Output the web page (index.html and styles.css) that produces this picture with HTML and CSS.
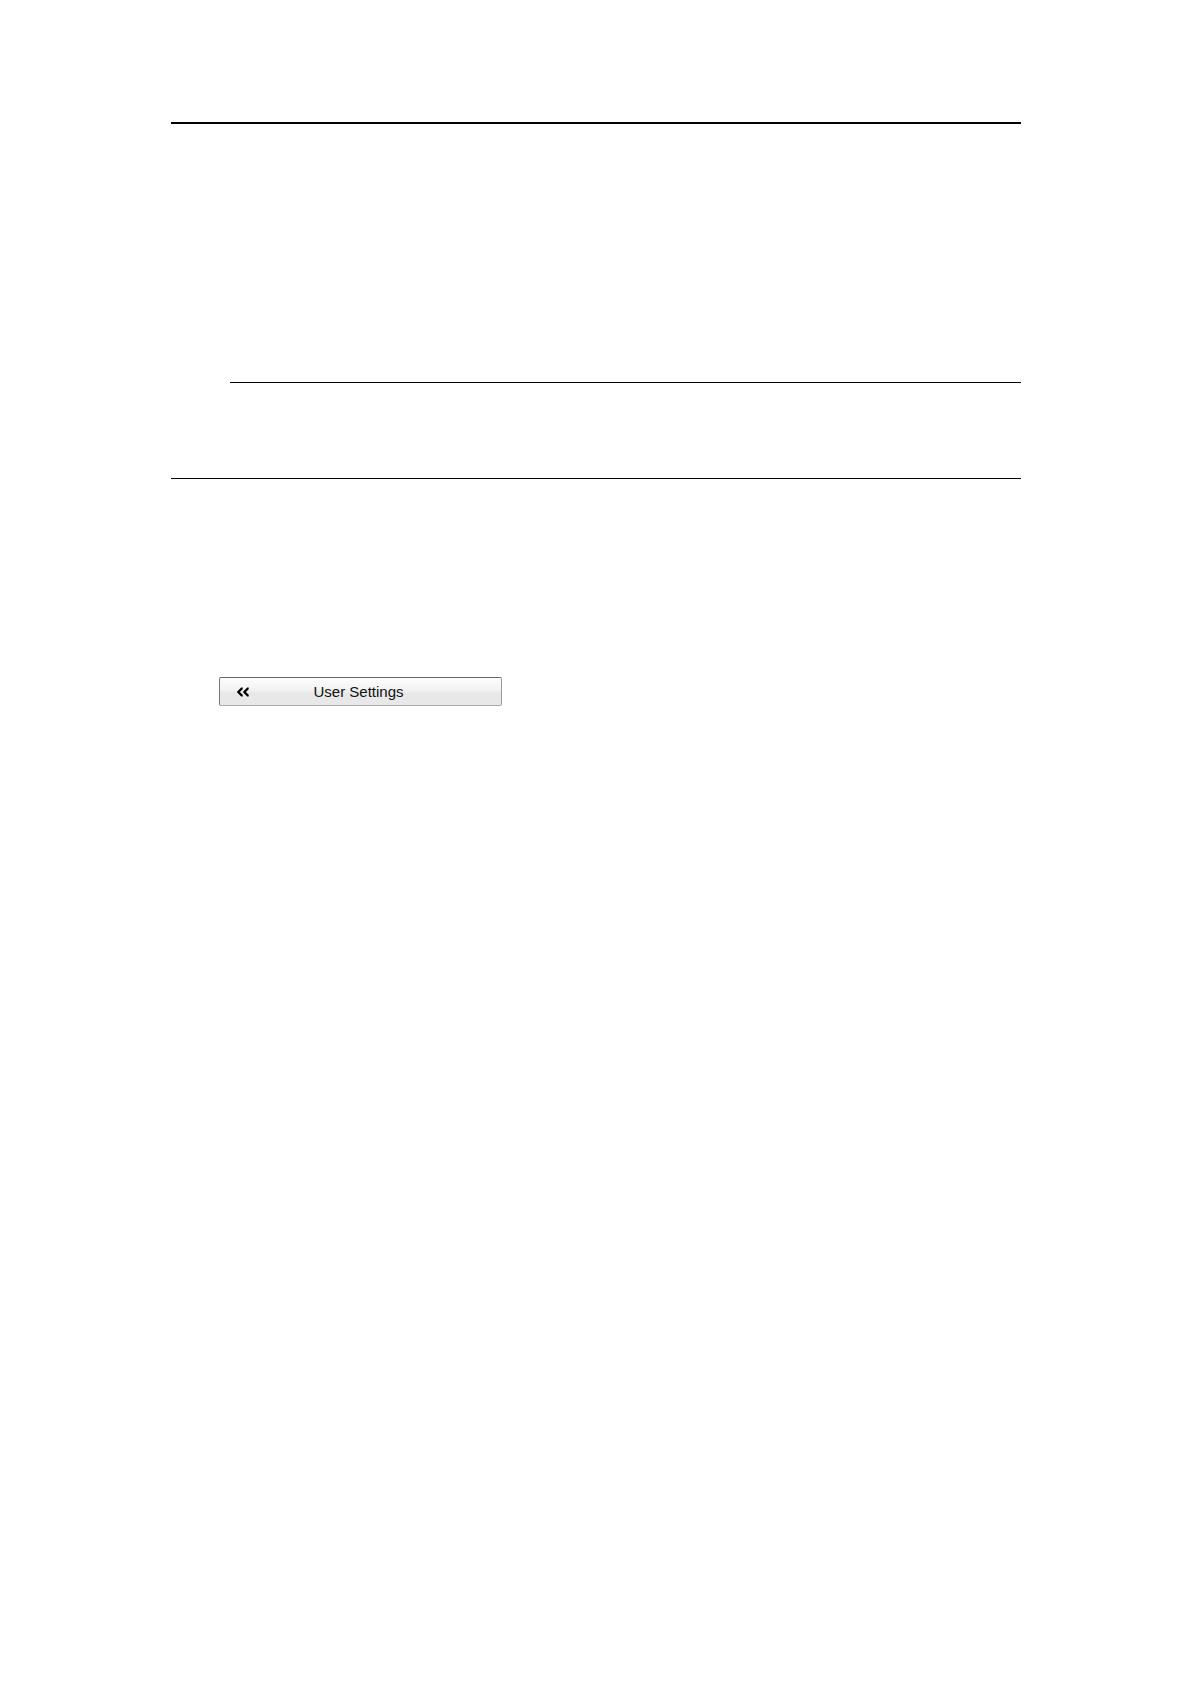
FILE: index.html
```html
<!DOCTYPE html>
<html lang="en">
<head>
<meta charset="utf-8">
<meta name="viewport" content="width=device-width, initial-scale=1">
<title>User Settings</title>
<link rel="stylesheet" href="styles.css">
</head>
<body>
<main class="page">
  <hr class="rule rule-header">
  <hr class="rule rule-indented">
  <hr class="rule rule-section">
  <button class="menu-button" type="button">
    <svg class="chevrons" viewBox="0 0 12 10" aria-hidden="true">
      <path d="M4.2 0.4H5.7V2.2L2.9 5L5.7 7.8V9.6H4.2L0.2 5.6V4.4ZM10.2 0.4H11.7V2.2L8.9 5L11.7 7.8V9.6H10.2L6.2 5.6V4.4Z"/>
    </svg>
    <span class="menu-label">User Settings</span>
  </button>
</main>
</body>
</html>
```
FILE: styles.css
```css
* {
  box-sizing: border-box;
}

body {
  margin: 0;
  background: #fff;
  color: #000;
  font-family: "Liberation Sans", Arial, sans-serif;
}

.page {
  display: flex;
  flex-direction: column;
  min-height: 100vh;
  padding: 122px 170px 122px 171px;
}

.rule {
  align-self: stretch;
  height: 1px;
  margin: 0;
  border: 0;
  background: #000;
}

.rule-header {
  height: 2px;
}

.rule-indented {
  margin-top: 258px;
  margin-left: 59px;
}

.rule-section {
  margin-top: 95px;
}

.menu-button {
  display: grid;
  grid-template-columns: 12px 1fr 12px;
  align-items: center;
  width: 283px;
  max-width: 100%;
  height: 29px;
  margin: 198px 0 0 48px;
  padding: 0 21px 0 17px;
  border: 1px solid;
  border-color: #666 #999 #aaa #777;
  border-radius: 2px;
  background: linear-gradient(#fdfdfd, #f2f2f2 45%, #e8e8e8 55%, #e8e8e8);
  color: #111;
  font-family: inherit;
  font-size: 15px;
  line-height: 20px;
}

.chevrons {
  width: 12px;
  height: 10px;
  fill: #000;
}

.menu-label {
  text-align: center;
}
```
